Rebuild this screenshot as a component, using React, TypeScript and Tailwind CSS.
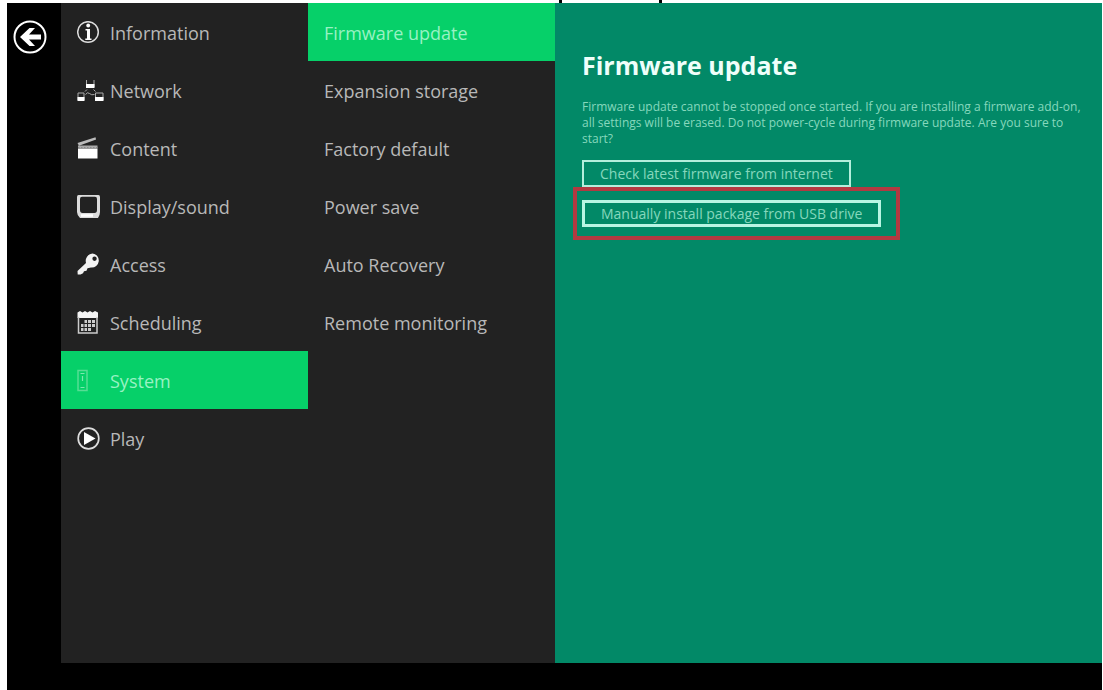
import type { ReactNode } from "react";

const iconClass = "h-6 w-7 shrink-0";

const BackIcon = () => (
  <svg viewBox="0 0 34 34" className="size-[34px]" aria-hidden="true">
    <circle cx="17" cy="17" r="15.5" fill="none" stroke="#fff" strokeWidth="2" />
    <path d="M7 17 16.500 8h5.500l-6 6.500H28v5H16l6 6.500h-5.500z" fill="#fff" />
  </svg>
);

const InfoIcon = () => (
  <svg viewBox="0 0 28 24" className={iconClass} aria-hidden="true">
    <circle cx="11" cy="11" r="10.300" fill="none" stroke="#ddd" strokeWidth="1.500" />
    <circle cx="11.200" cy="4.500" r="1.900" fill="#fff" />
    <path d="M8.500 8h4.500v9.500h1.500V19H8.300v-1.500h1.700V9.500H8.500z" fill="#fff" />
  </svg>
);

const NetworkIcon = () => (
  <svg viewBox="0 0 28 24" className={iconClass} aria-hidden="true">
    <g fill="none" stroke="#aaa" strokeWidth="1">
      <path d="M9.500 1v7h7.500V1M1 14v7h6v-7zM18.500 14v7H26v-7z" />
      <path d="M8.500 15.500q2-3 4-1t5 1M10 10.500l-2 2M16.500 10.500l2 2" />
    </g>
    <path d="M9 5h8.500v4H9zM.500 18h7v4h-7zM18 18h8.500v4H18z" fill="#fff" />
  </svg>
);

const ContentIcon = () => (
  <svg viewBox="0 0 28 24" className={iconClass} aria-hidden="true">
    <path d="M1 11.500h19.500v10H1z" fill="#fff" />
    <path d="M1 8.500h19.500v3H1z" fill="#aaa" />
    <path d="M1 10.500h20" stroke="#888" strokeWidth="1" strokeDasharray="1.500 1.500" />
    <path d="M.500 6 18.500.300l.6 2.300L2 8.800z" fill="#bbb" />
  </svg>
);

const DisplayIcon = () => (
  <svg viewBox="0 0 28 24" className={iconClass} aria-hidden="true">
    <path
      fillRule="evenodd"
      d="M1.500 0h20q1.500 0 1.500 2v15q0 3-2 6H3Q0 20 0 17V2Q0 0 1.500 0zM5 1.800Q3 1.800 3 4v11q0 3 2.500 3h12q2.500 0 2.500-3V4q0-2.200-2-2.200z"
      fill="#dcdcdc"
    />
    <path d="M4 20.500h12" stroke="#fff" strokeWidth="2.500" />
  </svg>
);

const AccessIcon = () => (
  <svg viewBox="0 0 28 24" className={iconClass} aria-hidden="true">
    <path
      fillRule="evenodd"
      d="M15.500.500a7 7 0 1 1-1.500 14l-3.500.700-1 2.500-2.500.500-1 2-2.500 1.300H.700L.500 18 9 10A7.500 7.500 0 0 1 15.500.500zM17.500 3.500a2.200 2.200 0 1 0 .1 4.400 2.200 2.200 0 0 0-.1-4.400z"
      fill="#f3f3f3"
    />
  </svg>
);

const SchedulingIcon = () => (
  <svg viewBox="0 0 28 24" className={iconClass} aria-hidden="true">
    <path d="M.500 1.500 3 0l2.500 1.500L8 0l2.500 1.500L13 0l2.500 1.500L18 0l3 1.500V7H.500z" fill="#f3f3f3" />
    <path d="M1.500 6v16h18.500V6" fill="none" stroke="#ccc" strokeWidth="1.500" />
    <path
      d="M7.500 9H10v3H7.500zM11 9h3v3h-3zM15 9h3v3h-3zM4 13h2.500v3H4zM7.500 13H10v3H7.500zM11 13h3v3h-3zM15 13h3v3h-3zM4 17h2.500v3H4zM7.500 17H10v3H7.500zM11 17h3v3h-3z"
      fill="#ccc"
    />
  </svg>
);

const SystemIcon = () => (
  <svg viewBox="0 0 28 24" className={iconClass} aria-hidden="true">
    <path d="M1 1.500h9v20H1z" fill="none" stroke="#56dd94" strokeWidth="1.500" />
    <path d="M3.500 4.500h4M5.500 7v5M3.500 18.500h4" stroke="#7be9ae" strokeWidth="1.200" />
  </svg>
);

const PlayIcon = () => (
  <svg viewBox="0 0 28 24" className={iconClass} aria-hidden="true">
    <circle cx="11.500" cy="11.500" r="10.300" fill="none" stroke="#ddd" strokeWidth="1.700" />
    <path d="M7 5v13l11.500-6.500z" fill="#fff" />
  </svg>
);

const sections: { label: string; icon: ReactNode }[] = [
  { label: "Information", icon: <InfoIcon /> },
  { label: "Network", icon: <NetworkIcon /> },
  { label: "Content", icon: <ContentIcon /> },
  { label: "Display/sound", icon: <DisplayIcon /> },
  { label: "Access", icon: <AccessIcon /> },
  { label: "Scheduling", icon: <SchedulingIcon /> },
  { label: "System", icon: <SystemIcon /> },
  { label: "Play", icon: <PlayIcon /> },
];

const pages = [
  "Firmware update",
  "Expansion storage",
  "Factory default",
  "Power save",
  "Auto Recovery",
  "Remote monitoring",
];

const rowClass = "flex h-[58px] w-full items-center px-4 pt-0.5 text-left text-lg";

function rowColours(active: boolean) {
  return active ? "bg-[#06d069] text-[#98f2c3]" : "text-[#b8b8b8]";
}

export default function App() {
  return (
    <div className="flex min-h-screen flex-col bg-white pr-px pl-[7px] font-['Open_Sans','Noto_Sans',sans-serif]">
      <div className="flex h-[3px] justify-end gap-[97px] pr-[440px]" aria-hidden="true">
        <span className="w-[3px] bg-black" />
        <span className="w-[3px] bg-black" />
      </div>
      <div className="flex grow flex-col bg-black pb-[27px]">
        <div className="flex grow">
          <div className="w-[54px] shrink-0 pt-[17px] pl-[6px]">
            <button type="button" aria-label="Back" className="block">
              <BackIcon />
            </button>
          </div>
          <div className="grid grow grid-cols-[247fr_247fr_547fr]">
            <nav aria-label="Settings" className="bg-[#222]">
              {sections.map(({ label, icon }) => (
                <button
                  key={label}
                  type="button"
                  className={`${rowClass} gap-[5px] ${rowColours(label === "System")}`}
                >
                  {icon}
                  {label}
                </button>
              ))}
            </nav>
            <nav aria-label="System" className="bg-[#222]">
              {pages.map((label) => (
                <button
                  key={label}
                  type="button"
                  className={`${rowClass} ${rowColours(label === "Firmware update")}`}
                >
                  {label}
                </button>
              ))}
            </nav>
            <main className="bg-[#028967] pt-11 pr-4 pl-[27px] text-[#86d8bd]">
              <h1 className="text-[25px] leading-9 font-bold text-[#effffa]">Firmware update</h1>
              <p className="mt-4 text-xs leading-4">
                Firmware update cannot be stopped once started. If you are installing a firmware
                add-on, all settings will be erased. Do not power-cycle during firmware update. Are
                you sure to start?
              </p>
              <button
                type="button"
                className="mt-[13px] block h-[27px] border-2 border-[#b4efdc] px-4 text-sm leading-5"
              >
                Check latest firmware from internet
              </button>
              <div className="-ml-[9px] w-fit border-4 border-[#b23a41] py-[9px] pr-[15px] pl-[5px]">
                <button
                  type="button"
                  className="block h-[27px] border-3 border-[#b8f5e3] px-4 text-sm leading-5"
                >
                  Manually install package from USB drive
                </button>
              </div>
            </main>
          </div>
        </div>
      </div>
    </div>
  );
}
